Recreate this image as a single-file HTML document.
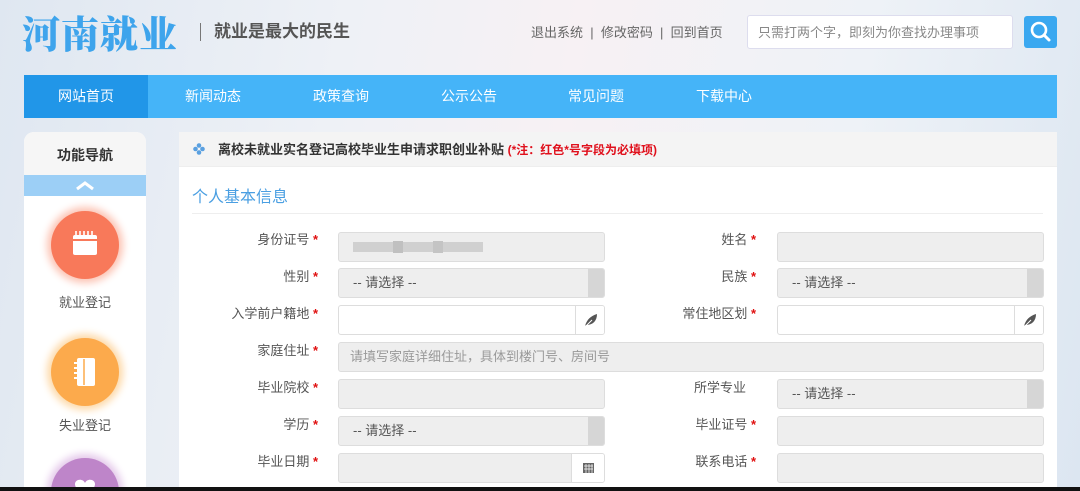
<!DOCTYPE html>
<html style="overflow:hidden"><head><meta charset="utf-8"><style>
*{margin:0;padding:0;box-sizing:border-box}
body{width:1080px;height:491px;overflow:hidden;position:relative;font-family:"Liberation Sans","Noto Sans CJK SC",sans-serif;background:linear-gradient(100deg,#dfe7f1 0%,#eef1f6 30%,#f7f1f4 50%,#eef2f7 75%,#dce6f1 100%);}
.a{position:absolute}
.logo{left:22px;top:8px;font-family:"Noto Serif CJK SC",serif;font-weight:900;font-size:38px;color:#3ea4ec;letter-spacing:1px;line-height:48px}
.sep{left:200px;top:23px;width:1px;height:18px;background:#777}
.tag{left:214px;top:21px;font-size:17px;font-weight:bold;color:#555;line-height:22px}
.links{left:531px;top:25px;font-size:13px;color:#666;line-height:16px}
.search{left:747px;top:15px;width:266px;height:34px;background:#fff;border:1px solid #dde;border-radius:3px;font-size:13px;color:#888;padding:9px 10px;line-height:16px}
.sbtn{left:1024px;top:16px;width:33px;height:32px;background:#3aa8f0;border-radius:3px}
.nav{left:24px;top:75px;width:1033px;height:43px;background:#45b4f8}
.nav div{position:absolute;top:0;width:128px;height:43px;line-height:43px;text-align:center;color:#fff;font-size:14px}
.side{left:24px;top:132px;width:122px;height:355px;background:#fff;border-radius:10px 10px 0 0;overflow:hidden}
.side .h{height:43px;background:#f6f6f6;text-align:center;font-weight:bold;font-size:14px;color:#333;line-height:46px}
.side .b{height:21px;background:#9ccff6;position:relative}
.circ{position:absolute;left:27px;width:68px;height:68px;border-radius:50%}
.lbl{position:absolute;left:0;width:122px;text-align:center;font-size:13px;color:#555}
.main{left:179px;top:132px;width:878px;height:355px;background:#fff;overflow:hidden}
.tbar{height:35px;background:#f4f4f4;border-bottom:1px solid #eee}
.ttl{position:absolute;left:39px;top:10px;font-size:13px;font-weight:bold;color:#333;line-height:16px}
.ttl span{color:#e0101c;font-size:12px}
.sec{position:absolute;left:13px;top:56px;font-size:16px;color:#4a9fe2;line-height:20px}
.ul{position:absolute;left:13px;top:81px;width:851px;height:1px;background:#eee}
.l{position:absolute;font-size:13px;color:#555;text-align:right;width:150px;line-height:16px}
.l i{color:#e01010;font-style:normal;font-weight:bold}
.in{position:absolute;height:30px;background:#eee;border:1px solid #ddd;border-radius:3px;font-size:13px;color:#555;line-height:28px;padding-left:14px;overflow:hidden}
.w{background:#fff}
.arr{position:absolute;right:0;top:0;width:16px;height:28px;background:#d6d6d6}
.ad{position:absolute;right:0;top:0;width:29px;height:28px;border-left:1px solid #ddd;background:#fff}
</style></head><body>
<div class="a logo">河南就业</div>
<div class="a sep"></div>
<div class="a tag">就业是最大的民生</div>
<div class="a links">退出系统 &nbsp;|&nbsp; 修改密码 &nbsp;|&nbsp; 回到首页</div>
<div class="a search">只需打两个字，即刻为你查找办理事项</div>
<div class="a sbtn"><svg width="33" height="32" viewBox="0 0 33 32"><circle cx="15" cy="14" r="7" fill="none" stroke="#fff" stroke-width="2.6"/><line x1="20" y1="19" x2="25" y2="24" stroke="#fff" stroke-width="3" stroke-linecap="round"/></svg></div>
<div class="a nav">
<div style="left:0;width:124px;background:#2196e8">网站首页</div>
<div style="left:125px">新闻动态</div>
<div style="left:253px">政策查询</div>
<div style="left:381px">公示公告</div>
<div style="left:508px">常见问题</div>
<div style="left:636px">下载中心</div>
</div>
<div class="a side">
<div class="h">功能导航</div>
<div class="b"><svg width="122" height="21"><polyline points="53,14 61,8 69,14" fill="none" stroke="#fff" stroke-width="3"/></svg></div>
<div class="circ" style="top:79px;background:#f8795a;box-shadow:0 0 8px 4px #fcc3b3"><svg width="68" height="68"><rect x="22" y="24" width="24" height="20" rx="2" fill="#fff"/><path d="M25 20v6M29 20v6M33 20v6M37 20v6M41 20v6" stroke="#fff" stroke-width="1.6"/><rect x="22" y="28" width="24" height="2" fill="#f8795a"/></svg></div>
<div class="lbl" style="top:160px">就业登记</div>
<div class="circ" style="top:206px;background:#fcaa4c;box-shadow:0 0 8px 4px #fdd9a8"><svg width="68" height="68"><rect x="26" y="20" width="18" height="28" rx="2" fill="#fff"/><path d="M23 25h6M23 30h6M23 35h6M23 40h6" stroke="#fff" stroke-width="2"/><path d="M33 21v26" stroke="#fcaa4c" stroke-width="1.5"/></svg></div>
<div class="lbl" style="top:283px">失业登记</div>
<div class="circ" style="top:326px;background:#be85c9;box-shadow:0 0 8px 4px #e4c8ea"><svg width="68" height="68"><path d="M24 26c0-5 8-6 10 -1c2-5 10-4 10 1c0 6-10 12-10 12s-10-6-10-12z" fill="#fff"/></svg></div>
</div>
<div class="a main">
<div class="tbar"></div>
<svg class="a" style="left:14px;top:11px" width="12" height="12"><circle cx="6" cy="2.5" r="2.3" fill="#5aa0e0"/><circle cx="2.5" cy="6" r="2.3" fill="#5aa0e0"/><circle cx="9.5" cy="6" r="2.3" fill="#5aa0e0"/><circle cx="6" cy="9.5" r="2.3" fill="#5aa0e0"/></svg>
<div class="ttl">离校未就业实名登记高校毕业生申请求职创业补贴 <span>(*注：红色*号字段为必填项)</span></div>
<div class="sec">个人基本信息</div>
<div class="ul"></div>
</div>
<div class="l" style="left:168px;top:232px">身份证号 <i>*</i></div>
<div class="in" style="left:338px;top:232px;width:267px"><svg width="140" height="28"><rect x="0" y="9" width="130" height="10" fill="#d0d0d0"/><rect x="40" y="8" width="10" height="12" fill="#c0c0c0"/><rect x="80" y="8" width="10" height="12" fill="#c4c4c4"/></svg></div>
<div class="l" style="left:606px;top:232px">姓名 <i>*</i></div>
<div class="in" style="left:777px;top:232px;width:267px"></div>

<div class="l" style="left:168px;top:269px">性别 <i>*</i></div>
<div class="in" style="left:338px;top:268px;width:267px">-- 请选择 --<div class="arr"></div></div>
<div class="l" style="left:606px;top:269px">民族 <i>*</i></div>
<div class="in" style="left:777px;top:268px;width:267px">-- 请选择 --<div class="arr"></div></div>

<div class="l" style="left:168px;top:306px">入学前户籍地 <i>*</i></div>
<div class="in w" style="left:338px;top:305px;width:267px"><div class="ad"><svg width="29" height="28"><path d="M9 20c2-7 6-10 12-12c0 7-4 11-11 11z" fill="#555"/><path d="M8 22l8-8" stroke="#fff" stroke-width="1"/></svg></div></div>
<div class="l" style="left:606px;top:306px">常住地区划 <i>*</i></div>
<div class="in w" style="left:777px;top:305px;width:267px"><div class="ad"><svg width="29" height="28"><path d="M9 20c2-7 6-10 12-12c0 7-4 11-11 11z" fill="#555"/><path d="M8 22l8-8" stroke="#fff" stroke-width="1"/></svg></div></div>

<div class="l" style="left:168px;top:343px">家庭住址 <i>*</i></div>
<div class="in" style="left:338px;top:342px;width:706px;color:#999;padding-left:11px">请填写家庭详细住址，具体到楼门号、房间号</div>

<div class="l" style="left:168px;top:380px">毕业院校 <i>*</i></div>
<div class="in" style="left:338px;top:379px;width:267px"></div>
<div class="l" style="left:606px;top:380px;padding-right:10px">所学专业</div>
<div class="in" style="left:777px;top:379px;width:267px">-- 请选择 --<div class="arr"></div></div>

<div class="l" style="left:168px;top:417px">学历 <i>*</i></div>
<div class="in" style="left:338px;top:416px;width:267px">-- 请选择 --<div class="arr"></div></div>
<div class="l" style="left:606px;top:417px">毕业证号 <i>*</i></div>
<div class="in" style="left:777px;top:416px;width:267px"></div>

<div class="l" style="left:168px;top:454px">毕业日期 <i>*</i></div>
<div class="in" style="left:338px;top:453px;width:267px"><div class="ad" style="width:33px"><svg width="33" height="28"><rect x="11" y="9" width="11" height="10" fill="#666"/><path d="M12 12h9M12 15h9M14 10v9M17 10v9M20 10v9" stroke="#fff" stroke-width="0.7"/></svg></div></div>
<div class="l" style="left:606px;top:454px">联系电话 <i>*</i></div>
<div class="in" style="left:777px;top:453px;width:267px"></div>
<div class="a" style="left:0;top:487px;width:1080px;height:4px;background:#111"></div>
</body></html>
